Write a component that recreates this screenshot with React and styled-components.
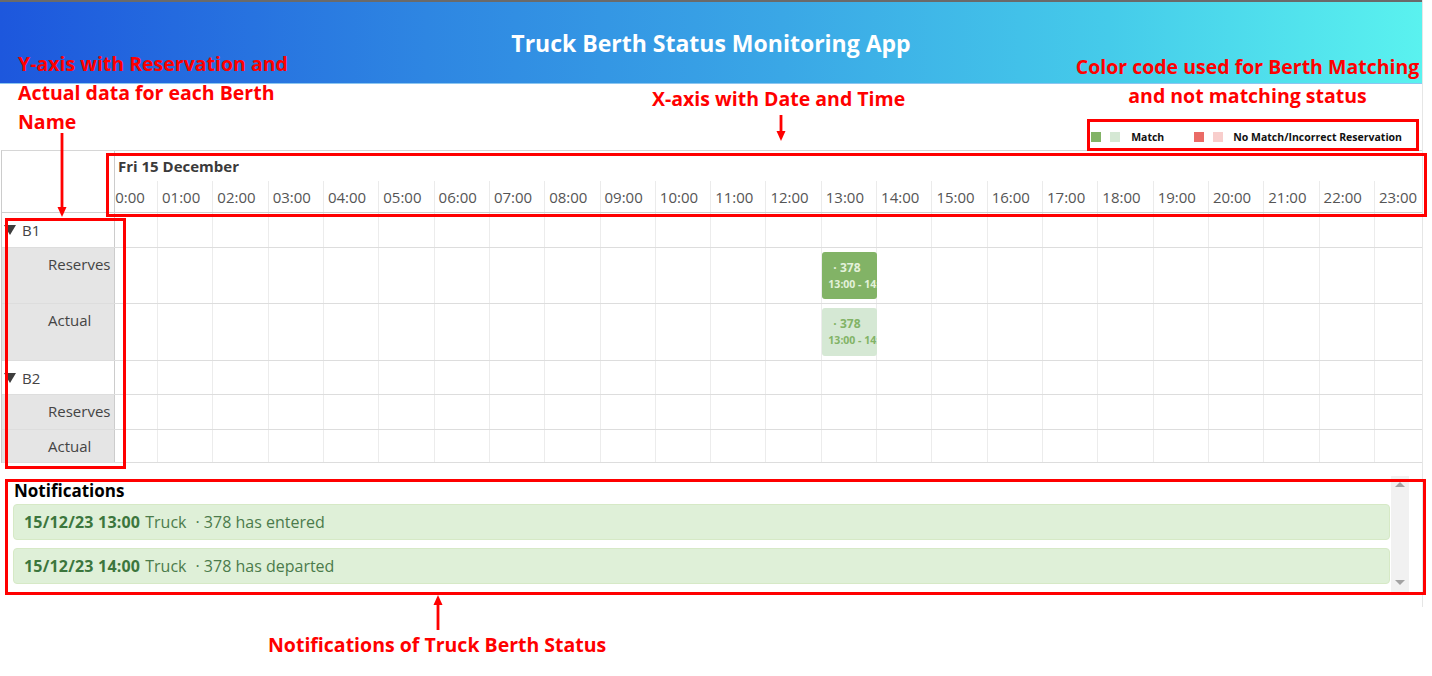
import React from 'react';
import styled, { createGlobalStyle } from 'styled-components';

const GlobalStyle = createGlobalStyle`
  html, body { margin: 0; padding: 0; background: #ffffff; }
  body { font-family: "Open Sans", "Noto Sans", Arial, sans-serif; color: #333; }
  * { box-sizing: border-box; }
`;

const COL_W = 55.32;
const SCROLL = 12.3;
const HOURS = Array.from({ length: 24 }, (_, i) => String(i).padStart(2, '0') + ':00');

const berths = [
  {
    name: 'B1',
    groupH: 34,
    rows: [
      { label: 'Reserves', h: 55, events: [{ id: '378', start: 13, end: 14, kind: 'reserve' }] },
      { label: 'Actual', h: 56, events: [{ id: '378', start: 13, end: 14, kind: 'actual' }] },
    ],
  },
  {
    name: 'B2',
    groupH: 33,
    rows: [
      { label: 'Reserves', h: 34, events: [] },
      { label: 'Actual', h: 32, events: [] },
    ],
  },
];

const notifications = [
  { when: '15/12/23 13:00', truck: '378', action: 'has entered' },
  { when: '15/12/23 14:00', truck: '378', action: 'has departed' },
];

/* ---------- page ---------- */
const Frame = styled.div`
  position: relative;
  width: 1432px;
  height: 676px;
  overflow: hidden;
`;

const Page = styled.div`
  width: 1423px;
  height: 607px;
  border-right: 1px solid #e6e6e6;
  display: flex;
  flex-direction: column;
`;

const Header = styled.header`
  height: 84px;
  border-top: 2px solid #6a6a6a;
  border-bottom: 1px solid #8cc6f0;
  background: linear-gradient(90deg, #1d57dd 0%, #2e86e2 30%, #3aa7e6 55%, #45cbea 78%, #5af2ef 100%);
  display: flex;
  align-items: center;
  justify-content: center;
`;

const Title = styled.h1`
  margin: 0;
  color: #ffffff;
  font-size: 23px;
  font-weight: 700;
  letter-spacing: 0px;
`;

const LegendBar = styled.div`
  height: 66px;
  display: flex;
  justify-content: flex-end;
  align-items: flex-end;
  padding: 0 20px 6px 0;
`;

const Legend = styled.div`
  display: flex;
  align-items: center;
  font-size: 10.5px;
  font-weight: 700;
  color: #111;
`;

const Swatch = styled.span`
  width: 10px;
  height: 10px;
  background: ${(p) => p.$color};
  margin-right: ${(p) => p.$gap}px;
`;

const LegendText = styled.span`
  margin-right: ${(p) => p.$gap || 0}px;
  line-height: 14px;
`;

/* ---------- scheduler ---------- */
const Scheduler = styled.div`
  margin-left: 1px;
  border-left: 1px solid #cccccc;
  border-top: 1px solid #d6d6d6;
  display: flex;
  flex-direction: column;
`;

const Row = styled.div`
  display: grid;
  grid-template-columns: 113px 1fr;
  height: ${(p) => p.$h + 1}px;
  border-bottom: 1px solid ${(p) => (p.$strong ? '#cfcfcf' : '#dddddd')};
`;

const LabelCell = styled.div`
  border-right: 1px solid #cccccc;
  background: ${(p) => (p.$shade ? '#e5e5e5' : '#ffffff')};
  font-size: 15px;
  line-height: 20px;
  color: #444;
  padding: ${(p) => (p.$group ? '0 0 0 2px' : '6px 0 0 46px')};
  display: flex;
  align-items: ${(p) => (p.$group ? 'center' : 'flex-start')};
`;

const Caret = styled.span`
  width: 0;
  height: 0;
  border-left: 6px solid transparent;
  border-right: 6px solid transparent;
  border-top: 10px solid #3d3d3d;
  margin-right: 6px;
`;

const TimeHeader = styled.div`
  display: flex;
  flex-direction: column;
  overflow: hidden;
`;

const DateLabel = styled.div`
  height: 30px;
  padding-left: 3px;
  font-size: 15px;
  font-weight: 700;
  color: #3a3a3a;
  display: flex;
  align-items: center;
`;

const Track = styled.div`
  position: relative;
  overflow: hidden;
  flex: 1;
`;

const Columns = styled.div`
  position: relative;
  display: flex;
  height: 100%;
  margin-left: -${SCROLL}px;
  width: ${COL_W * 24}px;
`;

const HourCell = styled.div`
  flex: 0 0 ${COL_W}px;
  border-right: 1px solid #ebebeb;
  height: 100%;
  font-size: 15px;
  color: #555;
  padding-left: 4px;
  display: flex;
  align-items: center;
  white-space: nowrap;
`;

const GridCell = styled.div`
  flex: 0 0 ${COL_W}px;
  border-right: 1px solid #ececec;
  height: 100%;
`;

const Event = styled.div`
  position: absolute;
  top: 4px;
  bottom: 4px;
  border-radius: 3px;
  overflow: hidden;
  padding: 8px 0 0 6px;
  white-space: nowrap;
  font-weight: 700;
  background: ${(p) => (p.$kind === 'reserve' ? '#82b366' : '#d5e8d4')};
  color: ${(p) => (p.$kind === 'reserve' ? '#e3f1da' : '#82b366')};
`;

const EventTitle = styled.div`
  font-size: 12px;
  line-height: 16px;
  padding-left: 5px;
`;

const EventTime = styled.div`
  font-size: 10.5px;
  line-height: 16px;
`;

/* ---------- notifications ---------- */
const NotifPanel = styled.section`
  margin: 13px 13px 0 13px;
  height: 117px;
  display: flex;
`;

const NotifList = styled.div`
  flex: 1;
  overflow: hidden;
  padding-right: 1px;
`;

const NotifHeading = styled.h2`
  margin: 0;
  height: 28px;
  font-size: 17px;
  font-weight: 700;
  color: #000;
  line-height: 29px;
  padding-left: 1px;
`;

const NotifItem = styled.div`
  height: 36px;
  margin-bottom: 8px;
  border: 1px solid #d6e9c6;
  border-radius: 4px;
  background: #dff0d8;
  color: #3c763d;
  font-size: 16px;
  padding: 0 10px;
  display: flex;
  align-items: center;
  white-space: nowrap;
`;

const When = styled.strong`
  font-weight: 700;
  margin-right: 5px;
  letter-spacing: 0.2px;
`;

const Muted = styled.span`
  color: #4b7b4b;
`;

const TruckId = styled.span`
  margin-left: 9px;
  color: #4b7b4b;
`;

const Scrollbar = styled.div`
  width: 18px;
  background: #f1f1f1;
  display: flex;
  flex-direction: column;
  justify-content: space-between;
  align-items: center;
  padding: 6px 0 8px;
`;

const ScrollArrow = styled.span`
  width: 0;
  height: 0;
  border-left: 5px solid transparent;
  border-right: 5px solid transparent;
  ${(p) => (p.$up ? 'border-bottom: 5px solid #a3a3a3;' : 'border-top: 5px solid #a3a3a3;')}
`;

/* ---------- annotations (overlay) ---------- */
const Note = styled.div`
  position: absolute;
  left: ${(p) => p.$x}px;
  top: ${(p) => p.$y}px;
  width: ${(p) => (p.$w ? `${p.$w}px` : 'auto')};
  text-align: ${(p) => p.$align || 'left'};
  color: #ff0000;
  font-family: "Open Sans", "Liberation Sans", sans-serif;
  font-weight: 700;
  font-size: 19.5px;
  line-height: 29px;
  white-space: nowrap;
`;

const RedBox = styled.div`
  position: absolute;
  left: ${(p) => p.$x}px;
  top: ${(p) => p.$y}px;
  width: ${(p) => p.$w}px;
  height: ${(p) => p.$h}px;
  border: 3px solid #ff0000;
  pointer-events: none;
`;

const ArrowSvg = styled.svg`
  position: absolute;
  left: ${(p) => p.$x - 6}px;
  top: ${(p) => p.$y}px;
  overflow: visible;
`;

function Arrow({ x, y, len, up }) {
  return (
    <ArrowSvg $x={x} $y={y} width="12" height={len} viewBox={`0 0 12 ${len}`}>
      {up ? (
        <>
          <polygon points="6,0 1.5,10 10.5,10" fill="#ff0000" />
          <rect x="4.6" y="9" width="2.8" height={len - 9} fill="#ff0000" />
        </>
      ) : (
        <>
          <rect x="4.6" y="0" width="2.8" height={len - 9} fill="#ff0000" />
          <polygon points={`1.5,${len - 10} 10.5,${len - 10} 6,${len}`} fill="#ff0000" />
        </>
      )}
    </ArrowSvg>
  );
}

function GridTrack({ events = [] }) {
  return (
    <Track>
      <Columns>
        {HOURS.map((h) => (
          <GridCell key={h} />
        ))}
        {events.map((e) => (
          <Event
            key={e.kind + e.id}
            $kind={e.kind}
            style={{ left: e.start * COL_W + 0.5, width: (e.end - e.start) * COL_W - 0.5 }}
          >
            <EventTitle>· {e.id}</EventTitle>
            <EventTime>
              {String(e.start).padStart(2, '0')}:00 - {String(e.end).padStart(2, '0')}:00
            </EventTime>
          </Event>
        ))}
      </Columns>
    </Track>
  );
}

export default function App() {
  return (
    <Frame>
      <GlobalStyle />
      <Page>
        <Header>
          <Title>Truck Berth Status Monitoring App</Title>
        </Header>
        <LegendBar>
          <Legend>
            <Swatch $color="#82b366" $gap={9} />
            <Swatch $color="#d5e8d4" $gap={11} />
            <LegendText $gap={30}>Match</LegendText>
            <Swatch $color="#ea6b66" $gap={9} />
            <Swatch $color="#f8cecc" $gap={10} />
            <LegendText>No Match/Incorrect Reservation</LegendText>
          </Legend>
        </LegendBar>

        <Scheduler>
          <Row $h={61} $strong>
            <LabelCell />
            <TimeHeader>
              <DateLabel>Fri 15 December</DateLabel>
              <Track>
                <Columns>
                  {HOURS.map((h) => (
                    <HourCell key={h}>{h}</HourCell>
                  ))}
                </Columns>
              </Track>
            </TimeHeader>
          </Row>
          {berths.map((b) => (
            <React.Fragment key={b.name}>
              <Row $h={b.groupH}>
                <LabelCell $group>
                  <Caret />
                  {b.name}
                </LabelCell>
                <GridTrack />
              </Row>
              {b.rows.map((r) => (
                <Row key={b.name + r.label} $h={r.h}>
                  <LabelCell $shade>{r.label}</LabelCell>
                  <GridTrack events={r.events} />
                </Row>
              ))}
            </React.Fragment>
          ))}
        </Scheduler>

        <NotifPanel>
          <NotifList>
            <NotifHeading>Notifications</NotifHeading>
            {notifications.map((n) => (
              <NotifItem key={n.when}>
                <When>{n.when}</When>
                <Muted>Truck</Muted>
                <TruckId>
                  · {n.truck} {n.action}
                </TruckId>
              </NotifItem>
            ))}
          </NotifList>
          <Scrollbar>
            <ScrollArrow $up />
            <ScrollArrow />
          </Scrollbar>
        </NotifPanel>
      </Page>

      {/* annotation overlay */}
      <Note $x={18} $y={49}>
        Y-axis with Reservation and
        <br />
        Actual data for each Berth
        <br />
        Name
      </Note>
      <Note $x={652} $y={84}>X-axis with Date and Time</Note>
      <Note $x={1060} $y={52} $w={375} $align="center">
        Color code used for Berth Matching
        <br />
        and not matching status
      </Note>
      <Note $x={268} $y={630}>Notifications of Truck Berth Status</Note>

      <Arrow x={62} y={133} len={84} />
      <Arrow x={781} y={115} len={26} />
      <Arrow x={438} y={595} len={35} up />

      <RedBox $x={106} $y={153} $w={1321} $h={64} />
      <RedBox $x={5} $y={218} $w={121} $h={251} />
      <RedBox $x={1087} $y={119} $w={332} $h={32} />
      <RedBox $x={5} $y={479} $w={1421} $h={116} />
    </Frame>
  );
}
